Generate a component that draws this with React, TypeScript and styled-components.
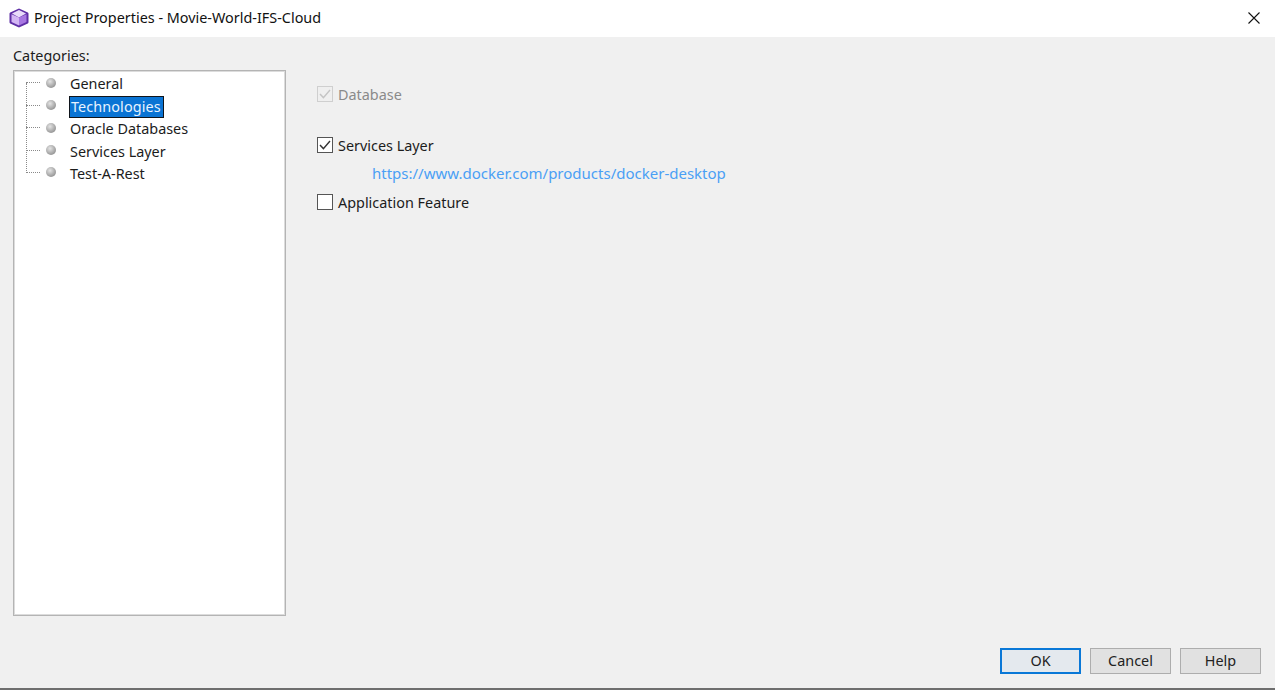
import React from "react";
import styled, { createGlobalStyle } from "styled-components";

const GlobalStyle = createGlobalStyle`
  html, body {
    margin: 0;
    padding: 0;
    background: #f0f0f0;
  }
  body {
    font-family: "Noto Sans", "Open Sans", sans-serif;
    font-size: 14.4px;
    color: #1c1c1c;
  }
`;

const categories = ["General", "Technologies", "Oracle Databases", "Services Layer", "Test-A-Rest"];

function CubeIcon() {
  return (
    <svg width="20" height="20" viewBox="0 0 20 20">
      <path d="M10 .4 18.800 4.600q.7.4.7 1.200v8.400q0 .8-.7 1.200L10 19.600 1.200 15.400q-.7-.4-.7-1.200V5.800q0-.8.7-1.200z" fill="#5f2fa6" />
      <path d="M10 2 17 5.600 10 9.400 3 5.600z" fill="#e9dcfa" />
      <path d="M2.500 6.200 10 9.400v8.200l-7.500-3.600z" fill="#d3b6f4" />
      <path d="M17.500 6.200 10 9.400v8.200l7.500-3.600z" fill="#a877e2" />
    </svg>
  );
}

function CloseIcon() {
  return (
    <svg width="12" height="12" viewBox="0 0 12 12">
      <path d="M.5.5l11 11M11.500.5l-11 11" stroke="#111" strokeWidth="1.1" fill="none" />
    </svg>
  );
}

function Tick({ color }: { color: string }) {
  return (
    <svg width="12" height="10" viewBox="0 0 12 10">
      <path d="M1 5l3.400 3.600L11 1" stroke={color} strokeWidth="1.400" fill="none" />
    </svg>
  );
}

function App() {
  return (
    <Dialog>
      <GlobalStyle />
      <TitleBar>
        <CubeIcon />
        <Title>Project Properties - Movie-World-IFS-Cloud</Title>
        <CloseButton>
          <CloseIcon />
        </CloseButton>
      </TitleBar>
      <Body>
        <Main>
          <Sidebar>
            <CategoryLabel>Categories:</CategoryLabel>
            <Tree>
              <TreeLine />
              {categories.map((name) => (
                <TreeRow key={name}>
                  <Connector />
                  <Bullet />
                  <RowLabel selected={name === "Technologies"}>{name}</RowLabel>
                </TreeRow>
              ))}
            </Tree>
          </Sidebar>
          <Panel>
            <CheckRow disabled>
              <CheckBox disabled>
                <Tick color="#c4c4c4" />
              </CheckBox>
              Database
            </CheckRow>
            <CheckRow spaced>
              <CheckBox>
                <Tick color="#333" />
              </CheckBox>
              Services Layer
            </CheckRow>
            <DockerLink>https://www.docker.com/products/docker-desktop</DockerLink>
            <CheckRow>
              <CheckBox />
              Application Feature
            </CheckRow>
          </Panel>
        </Main>
        <Footer>
          <DialogButton primary>OK</DialogButton>
          <DialogButton>Cancel</DialogButton>
          <DialogButton>Help</DialogButton>
        </Footer>
      </Body>
    </Dialog>
  );
}

const Dialog = styled.div`
  display: flex;
  flex-direction: column;
  width: 1275px;
  height: 690px;
  overflow: hidden;
`;

const TitleBar = styled.div`
  display: flex;
  align-items: center;
  height: 37px;
  flex: none;
  padding: 0 0 2px 9px;
  box-sizing: border-box;
  background: #fff;
`;

const Title = styled.div`
  margin-left: 5px;
  color: #111;
`;

const CloseButton = styled.div`
  display: flex;
  margin-left: auto;
  margin-right: 15px;
`;

const Body = styled.div`
  display: flex;
  flex-direction: column;
  flex: 1;
  background: #f0f0f0;
  border-bottom: 2px solid #6e6e6e;
`;

const Main = styled.div`
  display: flex;
  flex: 1;
  padding: 9px 0 0 13px;
`;

const Sidebar = styled.div`
  display: flex;
  flex-direction: column;
  width: 273px;
`;

const CategoryLabel = styled.div`
  height: 24px;
  line-height: 20px;
`;

const Tree = styled.div`
  position: relative;
  display: flex;
  flex-direction: column;
  box-sizing: border-box;
  height: 546px;
  padding: 2.2px 0 0 12px;
  background: #fff;
  border: 1px solid #b4b4b4;
  box-shadow: inset 0 0 0 1px #dcdcdc;
`;

const TreeLine = styled.div`
  position: absolute;
  left: 12px;
  top: 12px;
  width: 0;
  height: 90px;
  border-left: 1px dotted #8a8a8a;
`;

const TreeRow = styled.div`
  display: flex;
  align-items: center;
  height: 22.4px;
  flex: none;
`;

const Connector = styled.div`
  width: 14px;
  margin-top: -3px;
  border-top: 1px dotted #8a8a8a;
`;

const Bullet = styled.div`
  width: 10px;
  height: 10px;
  margin: -3px 0 0 6px;
  border-radius: 50%;
  background: radial-gradient(circle at 40% 35%, #e4e4e4, #9a9a9a 70%, #7d7d7d);
`;

const RowLabel = styled.div<{ selected?: boolean }>`
  box-sizing: border-box;
  height: 22px;
  line-height: 20px;
  padding: 0 ${(p) => (p.selected ? "2px" : "1px")} 0 1px;
  margin-left: ${(p) => (p.selected ? "13px" : "12px")};
  letter-spacing: ${(p) => (p.selected ? "0.1px" : "0")};
  color: ${(p) => (p.selected ? "#e8f3ff" : "#1c1c1c")};
  background: ${(p) => (p.selected ? "#0a74d4" : "transparent")};
  border: 1px solid ${(p) => (p.selected ? "#10151c" : "transparent")};
`;

const Panel = styled.div`
  display: flex;
  flex-direction: column;
  padding: 38px 0 0 31px;
`;

const CheckRow = styled.div<{ disabled?: boolean; spaced?: boolean }>`
  display: flex;
  align-items: center;
  gap: 5px;
  height: 20px;
  margin-top: ${(p) => (p.spaced ? "31px" : "0")};
  color: ${(p) => (p.disabled ? "#8a8a8a" : "#1c1c1c")};
`;

const CheckBox = styled.div<{ disabled?: boolean }>`
  display: flex;
  align-items: center;
  justify-content: center;
  box-sizing: border-box;
  width: 16px;
  height: 16px;
  margin-top: -1px;
  background: ${(p) => (p.disabled ? "#efefef" : "#fff")};
  border: 1px solid ${(p) => (p.disabled ? "#cfcfcf" : "#555")};
`;

const DockerLink = styled.div`
  height: 20px;
  margin: 8px 0 9px 55px;
  font-size: 15px;
  line-height: 20px;
  color: #4a9ff5;
`;

const Footer = styled.div`
  display: flex;
  justify-content: flex-end;
  gap: 9px;
  padding: 0 14px 14px 0;
`;

const DialogButton = styled.div<{ primary?: boolean }>`
  display: flex;
  align-items: center;
  justify-content: center;
  box-sizing: border-box;
  width: 81px;
  height: 26px;
  padding-bottom: 1px;
  color: #222;
  background: ${(p) => (p.primary ? "#e4e9ee" : "#e1e1e1")};
  border: ${(p) => (p.primary ? "2px solid #0a78d7" : "1px solid #adadad")};
`;

export default App;
